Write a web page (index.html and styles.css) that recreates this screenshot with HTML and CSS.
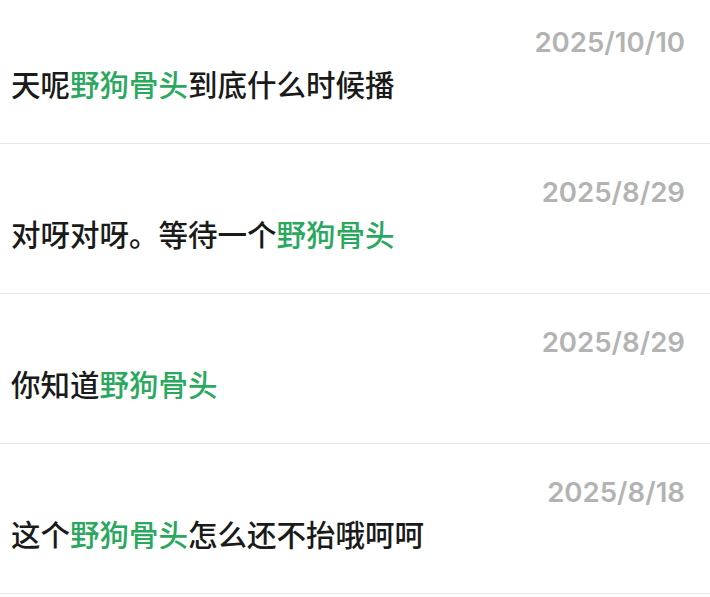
FILE: index.html
```html
<!DOCTYPE html>
<html lang="zh-CN">
<head>
    <meta charset="UTF-8">
    <title>评论</title>
    <link rel="stylesheet" href="styles.css">
</head>
<body>
<ul class="list">
    <li class="item">
        <span class="date">2025/10/10</span>
        <p class="text">天呢<em>野狗骨头</em>到底什么时候播</p>
    </li>
    <li class="item">
        <span class="date">2025/8/29</span>
        <p class="text">对呀对呀。等待一个<em>野狗骨头</em></p>
    </li>
    <li class="item">
        <span class="date">2025/8/29</span>
        <p class="text">你知道<em>野狗骨头</em></p>
    </li>
    <li class="item">
        <span class="date">2025/8/18</span>
        <p class="text">这个<em>野狗骨头</em>怎么还不抬哦呵呵</p>
    </li>
</ul>
</body>
</html>
```

FILE: styles.css
```css
/* reset */
body,ul,li,p{margin:0;padding:0}
ul{list-style:none}
body{
    background:#fff;
    font-family:Inter,"Noto Sans","Noto Sans CJK SC",sans-serif;
    color:#1a1a1a;
    overflow:hidden;
}

/* 列表已向上滚动了一点 */
.list{
    margin-top:-6px;
}
.item{
    display:flex;
    flex-direction:column;
    height:149px;
    padding:0 25px 0 11px;
    border-bottom:1px solid #e6e6e6;
}
.date{
    align-self:flex-end;
    margin-top:30px;
    height:36px;
    line-height:36px;
    font-size:27.6px;
    font-weight:600;
    color:#b3b3b3;
}
.text{
    margin-top:3px;
    line-height:40px;
    font-size:29.5px;
    font-weight:500;
    font-family:"Noto Sans CJK SC",sans-serif;
}
.text em{
    font-style:normal;
    color:#2aa85e;
}
```
